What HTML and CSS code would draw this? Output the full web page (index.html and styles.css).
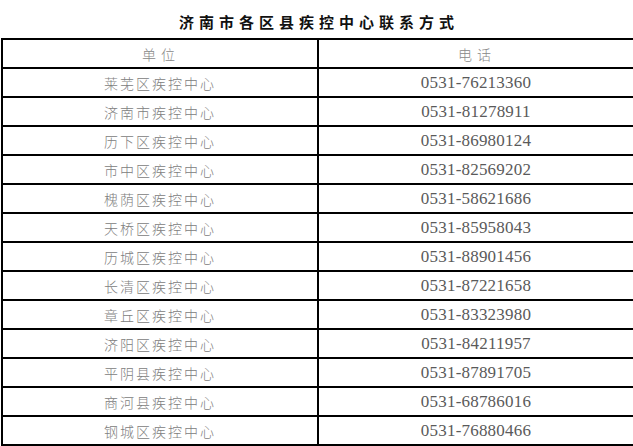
FILE: index.html
```html
<!DOCTYPE html>
<html lang="zh">
<head>
<meta charset="utf-8">
<link rel="stylesheet" href="styles.css">
</head>
<body>
<div class="page">
  <h1 class="title">济南市各区县疾控中心联系方式</h1>
  <table class="contacts">
    <tr><th>单位</th><th>电话</th></tr>
    <tr><td class="name">莱芜区疾控中心</td><td class="phone">0531-76213360</td></tr>
    <tr><td class="name">济南市疾控中心</td><td class="phone">0531-81278911</td></tr>
    <tr><td class="name">历下区疾控中心</td><td class="phone">0531-86980124</td></tr>
    <tr><td class="name">市中区疾控中心</td><td class="phone">0531-82569202</td></tr>
    <tr><td class="name">槐荫区疾控中心</td><td class="phone">0531-58621686</td></tr>
    <tr><td class="name">天桥区疾控中心</td><td class="phone">0531-85958043</td></tr>
    <tr><td class="name">历城区疾控中心</td><td class="phone">0531-88901456</td></tr>
    <tr><td class="name">长清区疾控中心</td><td class="phone">0531-87221658</td></tr>
    <tr><td class="name">章丘区疾控中心</td><td class="phone">0531-83323980</td></tr>
    <tr><td class="name">济阳区疾控中心</td><td class="phone">0531-84211957</td></tr>
    <tr><td class="name">平阴县疾控中心</td><td class="phone">0531-87891705</td></tr>
    <tr><td class="name">商河县疾控中心</td><td class="phone">0531-68786016</td></tr>
    <tr><td class="name">钢城区疾控中心</td><td class="phone">0531-76880466</td></tr>
  </table>
</div>
</body>
</html>
```
FILE: styles.css
```css
html, body {
  margin: 0;
  padding: 0;
  background: #fff;
  overflow: hidden;
}
.page {
  width: 633px;
  height: 446px;
  overflow: hidden;
}
.title {
  margin: 0;
  height: 38px;
  line-height: 43px;
  text-align: center;
  padding-left: 5px;
  font-family: "Noto Sans CJK SC", sans-serif;
  font-size: 15px;
  font-weight: bold;
  letter-spacing: 5px;
  color: #111;
}
.contacts {
  border-collapse: collapse;
  margin-left: 1px;
  width: 634px;
  table-layout: fixed;
}
.contacts th,
.contacts td {
  border: 2px solid #000;
  height: 27px;
  padding: 0;
  text-align: center;
  vertical-align: middle;
  width: 50%;
}
.contacts th,
.name {
  font-family: "Noto Sans CJK SC", sans-serif;
  font-size: 14px;
  font-weight: 300;
  letter-spacing: 2px;
  padding-left: 2px;
  color: #808080;
}
.contacts th {
  font-weight: 300;
  letter-spacing: 5px;
  color: #888;
}
.phone {
  font-family: "Liberation Serif", serif;
  font-size: 17px;
  letter-spacing: 0.2px;
  color: #5a5a5a;
}
```
